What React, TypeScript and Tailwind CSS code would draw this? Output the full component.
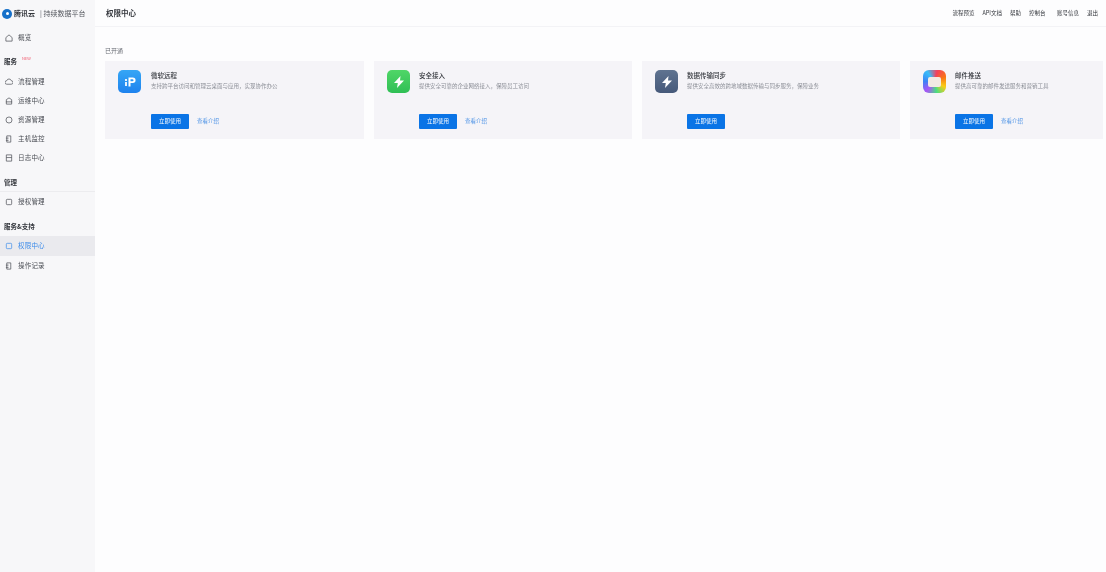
const font = { fontFamily: '"Noto Sans CJK SC", "Liberation Sans", sans-serif' };

function Outline({ kind }: { kind: string }) {
  const p = { fill: "none", stroke: "currentColor", strokeWidth: 0.8 };
  return (
    <svg width="8" height="8" viewBox="0 0 9 9" className="shrink-0">
      {kind === "home" && <path d="M1 4 4.500 1 8 4v4H1Z" {...p} />}
      {kind === "cloud" && <path d="M2 7a2 2 0 0 1 0-4 2.600 2.600 0 0 1 5 0 2 2 0 0 1 0 4Z" {...p} />}
      {kind === "box" && <path d="M1.500 8V3L4.500 1l3 2v5ZM1 5.500h7" {...p} />}
      {kind === "circle" && <circle cx="4.500" cy="4.500" r="3.400" {...p} />}
      {kind === "doc" && <path d="M2 1h4.500v7H2ZM1 3.500h3M1 6h3" {...p} />}
      {kind === "square" && <rect x="1.500" y="1.500" width="6" height="6" rx="1" {...p} />}
      {kind === "coupon" && <path d="M1.500 1h6v7h-6ZM1.500 4h6" {...p} />}
    </svg>
  );
}

function NavItem({ icon, label, active }: { icon: string; label: string; active?: boolean }) {
  return (
    <div
      className={`flex items-center gap-[5px] pl-[5px] text-[6.500px] ${
        active ? "h-[20px] bg-[#eaeaee] text-[#3b8bea]" : "h-[19px] text-[#4b4e55]"
      }`}
    >
      <Outline kind={icon} />
      <span className="tracking-[0.2px]">{label}</span>
    </div>
  );
}

function Section({ label, badge }: { label: string; badge?: string }) {
  return (
    <div className="flex items-start pl-[4px] text-[6.500px] font-bold text-[#33363c]">
      <span>{label}</span>
      {badge && <span className="ml-[5px] -mt-[2px] text-[4px] font-normal text-[#f0556a]">{badge}</span>}
    </div>
  );
}

function AppIcon({ kind }: { kind: string }) {
  if (kind === "p")
    return (
      <div className="w-[23px] h-[23px] shrink-0 rounded-[5px] bg-gradient-to-b from-[#36a6f5] to-[#1e82ee] flex items-center justify-center">
        <svg width="12" height="12" viewBox="0 0 12 12">
          <path d="M1 3h2v2H1ZM1 6h2v4H1Z" fill="#e6f3ff" />
          <path d="M4.500 1.500h4.300a2.500 2.500 0 0 1 0 5.500H6.500v3.500h-2Z M6.500 3.300V5.300h2a1 1 0 0 0 0-2Z" fill="#fff" fillRule="evenodd" />
        </svg>
      </div>
    );
  if (kind === "green")
    return (
      <div className="w-[23px] h-[23px] shrink-0 rounded-[5px] bg-gradient-to-b from-[#4fd667] to-[#2fbf55] flex items-center justify-center">
        <svg width="14" height="14" viewBox="0 0 14 14">
          <path d="M8.500 1 2 8h3.800L5 13l7-7.500H8Z" fill="#fff" />
        </svg>
      </div>
    );
  if (kind === "slate")
    return (
      <div className="w-[23px] h-[23px] shrink-0 rounded-[5px] bg-gradient-to-b from-[#5f7390] to-[#46597a] flex items-center justify-center">
        <svg width="14" height="14" viewBox="0 0 14 14">
          <path d="M8.500 1 2 8h3.800L5 13l7-7.500H8Z" fill="#fff" />
        </svg>
      </div>
    );
  return (
    <div className="w-[23px] h-[23px] shrink-0 rounded-[6px] bg-[conic-gradient(from_220deg,#a855f7,#3b82f6,#38bdf8,#f43f5e,#f97316,#facc15,#4ade80,#a855f7)] flex items-center justify-center">
      <div className="w-[13px] h-[10px] rounded-[2px] bg-[#f3e9e4]" />
    </div>
  );
}

const cards = [
  { w: "w-[259px]", gap: "ml-[10px]", icon: "p", title: "微软远程", desc: "支持跨平台访问和管理云桌面与应用，实现协作办公", link: "查看介绍" },
  { w: "w-[258px]", gap: "ml-[9px]", icon: "green", title: "安全接入", desc: "提供安全可靠的企业网络接入，保障员工访问", link: "查看介绍" },
  { w: "w-[258px]", gap: "ml-[9px]", icon: "slate", title: "数据传输同步", desc: "提供安全高效的跨地域数据传输与同步服务，保障业务", link: "" },
  { w: "w-[193px]", gap: "ml-[9px]", icon: "mail", title: "邮件推送", desc: "提供高可靠的邮件发送服务和营销工具", link: "查看介绍" },
];

export default function App() {
  return (
    <div className="flex h-[572px] w-[1106px] overflow-hidden bg-[#fdfdfe] blur-[0.5px]" style={font}>
      <aside className="w-[95px] shrink-0 bg-[#f7f7f9] flex flex-col">
        <div className="flex items-center h-[27px] pl-[2px] gap-[2px]">
          <div className="w-[10px] h-[10px] rounded-full bg-[#1670c9] flex items-center justify-center">
            <div className="w-[3px] h-[3px] rounded-full bg-white" />
          </div>
          <span className="text-[7px] font-bold text-[#33363c] whitespace-nowrap">腾讯云</span>
          <span className="text-[7px] text-[#55585f] whitespace-nowrap ml-[3px]">| 持续数据平台</span>
        </div>
        <div className="mt-[1px]">
          <NavItem icon="home" label="概览" />
        </div>
        <div className="mt-[10px]">
          <Section label="服务" badge="NEW" />
        </div>
        <div className="mt-[6px] flex flex-col">
          <NavItem icon="cloud" label="流程管理" />
          <NavItem icon="box" label="运维中心" />
          <NavItem icon="circle" label="资源管理" />
          <NavItem icon="doc" label="主机监控" />
          <NavItem icon="coupon" label="日志中心" />
        </div>
        <div className="mt-[10px] pb-[3px] border-b border-[#ececef]">
          <Section label="管理" />
        </div>
        <div className="mt-[1px]">
          <NavItem icon="square" label="授权管理" />
        </div>
        <div className="mt-[10px]">
          <Section label="服务&支持" />
        </div>
        <div className="mt-[5px] flex flex-col">
          <NavItem icon="square" label="权限中心" active />
          <NavItem icon="doc" label="操作记录" />
        </div>
      </aside>
      <main className="flex-1 min-w-0">
        <header className="h-[27px] flex items-center justify-between pl-[11px] pr-[8px] border-b border-[#f3f3f6]">
          <span className="text-[7.500px] font-bold text-[#33363c]">权限中心</span>
          <nav className="flex gap-[8px] text-[5.500px] text-[#33363c]">
            <span>流程预览</span>
            <span>API文档</span>
            <span>帮助</span>
            <span className="w-[20px]">控制台</span>
            <span>账号信息</span>
            <span>退出</span>
          </nav>
        </header>
        <div className="pl-[10px] pt-[19px]">
          <div className="text-[6px] leading-[9px] text-[#666a72]">已开通</div>
          <div className="flex gap-[10px] mt-[6px]">
            {cards.map((c) => (
              <div key={c.title} className={`${c.w} h-[78px] bg-[#f5f4f8] flex pl-[13px] pt-[9px] overflow-hidden`}>
                <AppIcon kind={c.icon} />
                <div className={`${c.gap} min-w-0`}>
                  <div className="text-[6.500px] leading-[10px] font-medium text-[#33363c] whitespace-nowrap">{c.title}</div>
                  <div className="text-[5.500px] leading-[13px] text-[#8b8e96] whitespace-nowrap">{c.desc}</div>
                  <div className="flex items-center mt-[21px]">
                    <div className="w-[38px] h-[15px] rounded-[1px] bg-[#0a74e6] text-white text-[5.500px] flex items-center justify-center">立即使用</div>
                    {c.link && <span className="ml-[8px] text-[5.500px] text-[#4e93e6]">{c.link}</span>}
                  </div>
                </div>
              </div>
            ))}
          </div>
        </div>
      </main>
    </div>
  );
}
